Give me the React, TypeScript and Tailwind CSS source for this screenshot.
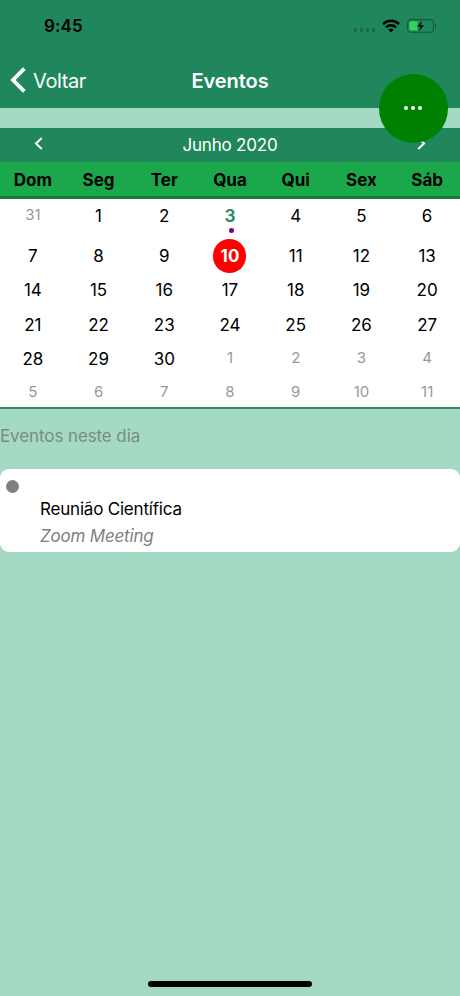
import React from 'react';
import clsx from 'clsx';

type Day = {
  n: number;
  muted?: boolean;
  today?: boolean;
  selected?: boolean;
};

const WEEKDAYS = ['Dom', 'Seg', 'Ter', 'Qua', 'Qui', 'Sex', 'Sáb'];

// June 2020, padded with the days around it
const DAYS: Day[] = [
  { n: 31, muted: true },
  ...Array.from({ length: 30 }, (_, i) => ({
    n: i + 1,
    today: i + 1 === 3,
    selected: i + 1 === 10,
  })),
  ...Array.from({ length: 11 }, (_, i) => ({ n: i + 1, muted: true })),
];

const WEEKS = [0, 1, 2, 3, 4, 5].map((w) => DAYS.slice(w * 7, w * 7 + 7));

const StatusBar = () => (
  <div className="flex h-[52px] items-center justify-between pl-11 pr-[23px] text-black">
    <span className="text-[17px] leading-5 font-semibold tracking-[0.15px]">9:45</span>
    <div className="flex items-center">
      <div className="mt-2 mr-[7px] flex gap-[2.5px]">
        {[0, 1, 2, 3].map((i) => (
          <div key={i} className="size-[3.5px] rounded-[1px] bg-[#186b48]" />
        ))}
      </div>
      <svg width="18" height="14" viewBox="0 0 18 14" fill="none" stroke="currentColor" strokeWidth="2.5">
        <path d="M1 5.1a11.4 11.4 0 0 1 16 0" />
        <path d="M4 8.3a7.1 7.1 0 0 1 10 0" />
        <path d="M9 13.4l-2.6-2.7a3.8 3.8 0 0 1 5.2 0z" fill="currentColor" stroke="none" />
      </svg>
      <svg className="ml-[7px]" width="30" height="14" viewBox="0 0 30 14">
        <rect x="0.6" y="0.6" width="26" height="12.6" rx="3.4" fill="none" stroke="#145b3d" strokeWidth="1.1" />
        <path d="M4 2.2h6.5v9.4H4A1.8 1.8 0 0 1 2.2 9.8V4A1.8 1.8 0 0 1 4 2.2z" fill="#37d25b" />
        <path d="M28 4.8c1.6.7 1.6 3.5 0 4.2z" fill="#145b3d" />
        <path d="M15.3 1.2L9.9 7.7h3.2l-1.3 5 5.4-6.6H14z" fill="#000" stroke="#1f875b" strokeWidth="0.4" />
      </svg>
    </div>
  </div>
);

const NavBar = () => (
  <div className="grid h-14 grid-cols-3 items-center text-white">
    <div className="flex items-center pl-2.5">
      <svg width="16" height="26" viewBox="0 0 16 26" fill="none" stroke="currentColor" strokeWidth="3.8">
        <path d="M14.3 1.6L3 13l11.3 11.4" />
      </svg>
      <span className="mt-0.5 ml-[7px] text-[20px] leading-6 tracking-[-0.4px]">Voltar</span>
    </div>
    <h1 className="mt-0.5 text-center text-[20px] leading-6 font-semibold tracking-[-0.05px]">Eventos</h1>
  </div>
);

const MonthBar = () => (
  <div className="flex h-[34px] justify-between bg-[#1f875b] px-[34px] text-white">
    <svg className="mt-[9px]" width="9" height="13" viewBox="0 0 9 13" fill="none" stroke="currentColor" strokeWidth="2">
      <path d="M7.8 1L2 6.5 7.8 12" />
    </svg>
    <span className="mt-[7px] text-[17px] leading-5 tracking-[-0.2px]">Junho 2020</span>
    <svg className="mt-[9px]" width="9" height="13" viewBox="0 0 9 13" fill="none" stroke="currentColor" strokeWidth="2">
      <path d="M1.2 1L7 6.5 1.2 12" />
    </svg>
  </div>
);

const DayCell = ({ day }: { day: Day }) => (
  <div className="flex flex-col items-center">
    <div
      className={clsx(
        'flex h-[34px] w-[33px] justify-center rounded-full',
        day.muted ? 'text-[15px] leading-[31px] text-[#999999]' : 'text-[17px] leading-[34px]',
        day.today && 'font-bold text-[#2e8b67]',
        day.selected && 'bg-[#ff0000] font-bold text-white'
      )}
    >
      {day.n}
    </div>
    {day.today && <div className="-mt-[5px] ml-[3px] size-[5px] rounded-full bg-[#800080]" />}
  </div>
);

const Calendar = () => (
  <div className="mt-5">
    <MonthBar />
    <div className="grid h-[37px] grid-cols-7 border-b-[3px] border-[#1c7a3b] bg-[#1ba84a] text-center text-[17px] leading-[36px] font-bold text-black">
      {WEEKDAYS.map((d) => (
        <span key={d}>{d}</span>
      ))}
    </div>
    <div className="h-[210px] border-b-2 border-[#3f8a5e] bg-white">
      {WEEKS.map((week, i) => (
        <div key={i} className={clsx('grid grid-cols-7', i === 0 ? 'h-10' : 'h-[34.3px]')}>
          {week.map((day, j) => (
            <DayCell key={j} day={day} />
          ))}
        </div>
      ))}
    </div>
  </div>
);

const EventCard = ({ title, place }: { title: string; place: string }) => (
  <div className="mt-[21px] flex h-[83px] rounded-[9px] bg-white">
    <div className="mt-[11px] ml-1.5 size-[13px] shrink-0 rounded-full bg-[#808080]" />
    <div className="mt-[27px] ml-[21px]">
      <p className="text-[17px] leading-[27px] tracking-[-0.2px] text-black">{title}</p>
      <p className="text-[17px] leading-[27px] tracking-[-0.2px] text-[#808080] italic">{place}</p>
    </div>
  </div>
);

export default function App() {
  return (
    <div className="relative flex h-[996px] w-[460px] flex-col overflow-hidden bg-[#a4dac3] font-['Inter',sans-serif]">
      <header className="bg-[#1f875b]">
        <StatusBar />
        <NavBar />
      </header>
      <Calendar />
      <h2 className="mt-[15px] text-[17px] leading-6 tracking-[-0.1px] text-[#7a8c82]">Eventos neste dia</h2>
      <EventCard title="Reunião Científica" place="Zoom Meeting" />

      {/* floating menu button */}
      <button className="absolute top-[73.5px] left-[378.5px] flex size-[69px] items-center justify-center gap-[3.4px] rounded-full bg-[#008000]">
        {[0, 1, 2].map((i) => (
          <span key={i} className="size-1 rounded-full bg-white" />
        ))}
      </button>

      <div className="mx-auto mt-auto mb-[9px] h-1.5 w-[164px] rounded-full bg-black" />
    </div>
  );
}
